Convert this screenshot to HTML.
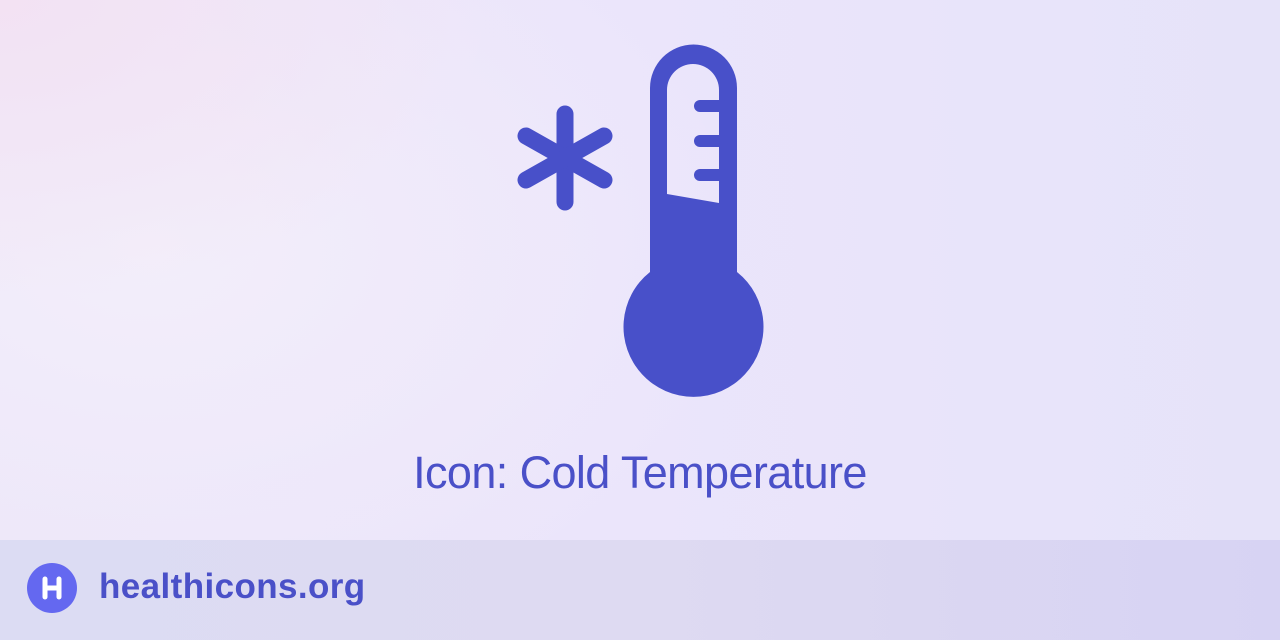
<!DOCTYPE html>
<html><head><meta charset="utf-8"><style>
html,body{margin:0;padding:0}
body{width:1280px;height:640px;position:relative;overflow:hidden;font-family:"Liberation Sans",sans-serif;
background:radial-gradient(ellipse 500px 300px at 0px 0px,#f3e2f3 0%,rgba(243,226,243,0) 100%),radial-gradient(ellipse 600px 400px at 150px 250px,#f3eefa 0%,rgba(243,238,250,0) 100%),linear-gradient(90deg,#ece6f9 0%,#ebe5fb 50%,#e6e3f9 100%);}
.title{position:absolute;left:0;right:0;top:447px;text-align:center;font-size:45px;color:#4a50c8;letter-spacing:-0.6px}
.foot{position:absolute;left:0;top:540px;width:1280px;height:100px;background:linear-gradient(90deg,#dcdcf3,#dedaf2 50%,#d7d3f3)}
.logo{position:absolute;left:27px;top:23px;width:50px;height:50px;border-radius:50%;background:#6468f0}
.site{position:absolute;left:99px;top:27px;font-size:35px;font-weight:bold;color:#4a50c8;letter-spacing:0.4px}
</style></head><body>
<svg width="1280" height="640" style="position:absolute;left:0;top:0">
<g stroke="#4850c9" stroke-width="17" stroke-linecap="round">
<line x1="565" y1="114" x2="565" y2="202"/>
<line x1="526" y1="136" x2="604" y2="180"/>
<line x1="526" y1="180" x2="604" y2="136"/>
</g>
<path fill="#4850c9" fill-rule="evenodd" d="M650,272 V88 A43.5,43.5 0 0 1 737,88 V272 A70,70 0 1 1 650,272 Z M667,194 L719,203 V90 A26,26 0 0 0 667,90 Z"/>
<g stroke="#4850c9" stroke-width="12" stroke-linecap="round">
<line x1="700" y1="106" x2="722" y2="106"/>
<line x1="700" y1="141" x2="722" y2="141"/>
<line x1="700" y1="175" x2="722" y2="175"/>
</g>
</svg>
<div class="title">Icon: Cold Temperature</div>
<div class="foot">
<div class="logo"><svg width="50" height="50"><g stroke="#fff" stroke-width="5" stroke-linecap="round"><line x1="18" y1="16" x2="18" y2="34"/><line x1="32" y1="16" x2="32" y2="34"/><line x1="18" y1="25" x2="32" y2="25"/></g></svg></div>
<div class="site">healthicons.org</div>
</div>
</body></html>
